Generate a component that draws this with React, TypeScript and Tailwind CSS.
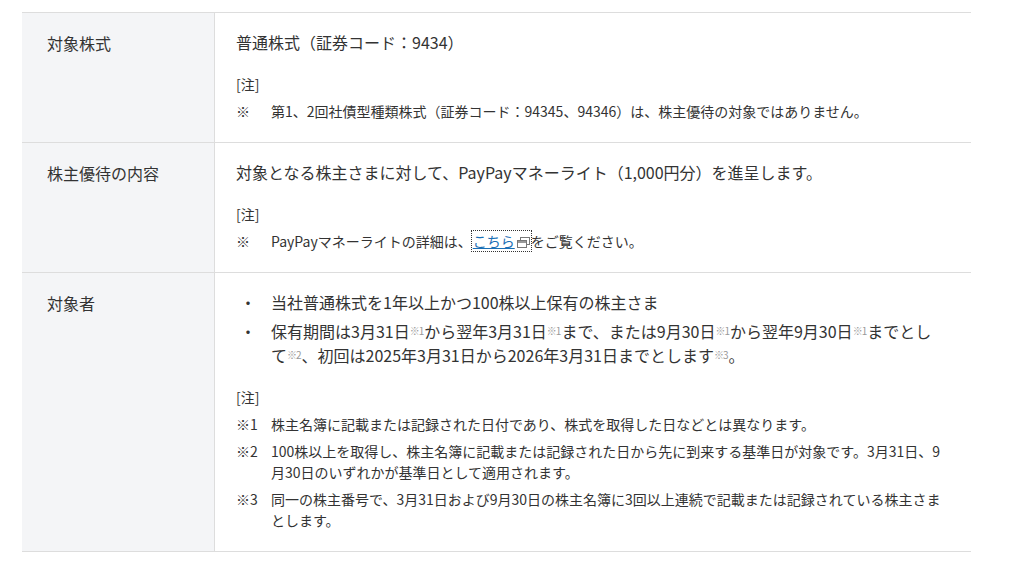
import React from "react";

const font = { fontFamily: '"Noto Sans CJK JP", "Noto Sans", sans-serif' };

function Sup({ n }: { n: string }) {
  return <sup className="text-[10px] text-[#999] relative -top-[3px] tracking-[-1px] pr-[1px]">※{n}</sup>;
}

function Note({ mark, children }: { mark: string; children: React.ReactNode }) {
  return (
    <li className="flex text-[14px] leading-[21px] mt-[6px]">
      <span className="w-[35px] shrink-0">{mark}</span>
      <span className="flex-1">{children}</span>
    </li>
  );
}

function Notes({ children }: { children: React.ReactNode }) {
  return (
    <div className="mt-[20px]">
      <p className="text-[14px] leading-[21px]">[注]</p>
      <ul>{children}</ul>
    </div>
  );
}

function Row({ label, children }: { label: string; children: React.ReactNode }) {
  return (
    <div className="flex border-b border-[#ddd]">
      <div className="w-[193px] shrink-0 bg-[#f4f5f7] border-r border-[#ddd] pl-[25px] pt-[18px] text-[16px] leading-[24px]">
        {label}
      </div>
      <div className="flex-1 pl-[21px] pr-[20px] pt-[17px] pb-[20px]">{children}</div>
    </div>
  );
}

function ExternalIcon() {
  return (
    <svg width="13" height="11" viewBox="0 0 13 11" className="inline-block ml-[2px] -mt-[2px]">
      <rect x="3.5" y="0.5" width="9" height="7" fill="none" stroke="#777" />
      <rect x="0.5" y="3.5" width="9" height="7" fill="#fff" stroke="#777" />
      <rect x="1" y="4" width="8" height="2" fill="#999" />
    </svg>
  );
}

export default function App() {
  return (
    <div className="bg-white w-[1011px] h-[564px] text-[#333]" style={font}>
      <div className="pt-[12px] pl-[22px]">
        <div className="w-[949px] border-t border-[#ddd]">
          <Row label="対象株式">
            <p className="text-[16px] leading-[24px]">普通株式（証券コード：9434）</p>
            <Notes>
              <Note mark="※">第1、2回社債型種類株式（証券コード：94345、94346）は、株主優待の対象ではありません。</Note>
            </Notes>
          </Row>
          <Row label="株主優待の内容">
            <p className="text-[16px] leading-[24px]">
              対象となる株主さまに対して、PayPayマネーライト（1,000円分）を進呈します。
            </p>
            <Notes>
              <Note mark="※">
                PayPayマネーライトの詳細は、
                <span className="outline-1 outline-dotted outline-[#333] outline-offset-0 px-[1px]">
                  <a className="text-[#1a6fb5] underline">こちら</a>
                  <ExternalIcon />
                </span>
                をご覧ください。
              </Note>
            </Notes>
          </Row>
          <Row label="対象者">
            <ul className="text-[16px] leading-[24px]">
              <li className="flex">
                <span className="w-[35px] shrink-0 pl-[4px]">・</span>
                <span className="flex-1">当社普通株式を1年以上かつ100株以上保有の株主さま</span>
              </li>
              <li className="flex mt-[5px]">
                <span className="w-[35px] shrink-0 pl-[4px]">・</span>
                <span className="flex-1">
                  保有期間は3月31日<Sup n="1" />から翌年3月31日<Sup n="1" />まで、または9月30日<Sup n="1" />から翌年9月30日
                  <Sup n="1" />までとし
                  <br />
                  て<Sup n="2" />、初回は2025年3月31日から2026年3月31日までとします<Sup n="3" />。
                </span>
              </li>
            </ul>
            <div className="mt-[5px]">
              <Notes>
                <Note mark="※1">株主名簿に記載または記録された日付であり、株式を取得した日などとは異なります。</Note>
                <Note mark="※2">
                  100株以上を取得し、株主名簿に記載または記録された日から先に到来する基準日が対象です。3月31日、9
                  <br />
                  月30日のいずれかが基準日として適用されます。
                </Note>
                <Note mark="※3">
                  同一の株主番号で、3月31日および9月30日の株主名簿に3回以上連続で記載または記録されている株主さま
                  <br />
                  とします。
                </Note>
              </Notes>
            </div>
          </Row>
        </div>
      </div>
    </div>
  );
}
